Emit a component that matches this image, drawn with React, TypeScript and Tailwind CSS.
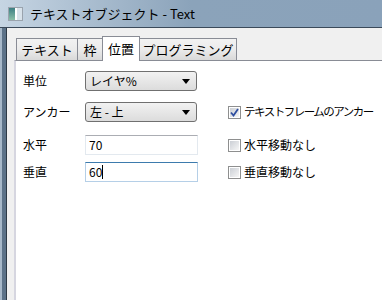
import React from 'react';

const font = { fontFamily: '"Noto Sans CJK JP", "Liberation Sans", sans-serif' };

function Tab({ label, active, w }: { label: string; active?: boolean; w: string }) {
  if (active) {
    return (
      <div className={`${w} h-[25px] -mb-[1px] -ml-[1px] relative z-10 shrink-0 flex items-center justify-center border border-b-0 border-[#898c95] bg-white text-[13px] text-black whitespace-nowrap`}>
        {label}
      </div>
    );
  }
  return (
    <div className={`${w} h-[22px] -ml-[1px] first:ml-0 shrink-0 flex items-center justify-center border border-b-0 border-[#898c95] bg-gradient-to-b from-[#f2f2f2] via-[#ebebeb] to-[#d9d9d9] text-[13px] text-black whitespace-nowrap`}>
      {label}
    </div>
  );
}

function Combo({ value }: { value: string }) {
  return (
    <div className="w-[112px] h-[20px] shrink-0 flex items-center justify-between pl-[4px] pr-[6px] rounded-[3px] border border-[#707070] bg-gradient-to-b from-[#f2f2f2] to-[#dcdcdc] text-[12px] whitespace-nowrap">
      <span>{value}</span>
      <svg width="8" height="5" viewBox="0 0 8 5">
        <path d="M0 0 H8 L4 5 Z" fill="#000" />
      </svg>
    </div>
  );
}

function Check({ checked, label, tight }: { checked?: boolean; label: string; tight?: boolean }) {
  return (
    <div className="flex items-center gap-[3px] text-[12px] whitespace-nowrap shrink-0">
      <div className="w-[13px] h-[13px] shrink-0 border border-[#8e8f8f] bg-white p-[1px]">
        <div className="w-full h-full bg-gradient-to-br from-[#cbcfd5] to-[#f6f6f6] flex items-center justify-center">
          {checked && (
            <svg width="9" height="9" viewBox="0 0 9 9">
              <path d="M1 4.5 L3.5 7.5 L8 1" stroke="#2f4fa0" strokeWidth="1.8" fill="none" />
            </svg>
          )}
        </div>
      </div>
      <span className={tight ? 'text-[11.5px] tracking-[-1.5px]' : ''}>{label}</span>
    </div>
  );
}

export default function App() {
  return (
    <div className="w-[382px] h-[300px] overflow-hidden flex flex-col bg-[#8ea5bc] text-black" style={font}>
      {/* title bar */}
      <div className="h-[28px] shrink-0 flex items-center bg-gradient-to-r from-[#c6d5e3] via-[#8ba3ba] to-[#8aa2ba] border-b border-[#3b4a5a]">
        <div className="ml-[8px] w-[15px] h-[14px] border border-[#9aa3ad] bg-white flex">
          <div className="w-[6px] h-full bg-gradient-to-b from-[#3c7f83] to-[#8ac0a8]" />
          <div className="w-[2px]" />
          <div className="w-[5px] h-full bg-[#d8e2ea]" />
        </div>
        <span className="ml-[7px] text-[13px] whitespace-nowrap">テキストオブジェクト - Text</span>
      </div>
      <div className="flex-1 flex min-h-0">
        {/* left frame */}
        <div className="w-[7px] flex shrink-0">
          <div className="w-[2px] bg-[#a7b8c9]" />
          <div className="w-[4px] bg-[#5c7288]" />
          <div className="w-[1px] bg-[#2d3945]" />
        </div>
        {/* client */}
        <div className="flex-1 min-w-0 bg-[#f0f0f0] pl-[7px] pt-[7px] flex flex-col">
          <div className="flex items-end pl-[2px] h-[25px]">
            <Tab label="テキスト" w="w-[62px]" />
            <Tab label="枠" w="w-[26px]" />
            <Tab label="位置" active w="w-[38px]" />
            <Tab label="プログラミング" w="w-[98px]" />
          </div>
          <div className="flex-1 border-t border-l-2 border-t-[#898c95] border-l-[#d6d6e0] bg-white pl-[7px] pt-[10px] text-[12px]">
            <div className="flex items-center h-[20px]">
              <span className="w-[62px] shrink-0 whitespace-nowrap">単位</span>
              <Combo value="レイヤ%" />
            </div>
            <div className="flex items-center h-[20px] mt-[11px]">
              <span className="w-[62px] shrink-0 whitespace-nowrap">アンカー</span>
              <Combo value="左 - 上" />
              <div className="ml-[31px] shrink-0">
                <Check checked tight label="テキストフレームのアンカー" />
              </div>
            </div>
            <div className="flex items-center h-[20px] mt-[13px]">
              <span className="w-[62px] shrink-0 whitespace-nowrap">水平</span>
              <div className="w-[113px] h-[20px] shrink-0 flex items-center pl-[3px] border border-[#e3e9ef] border-t-[#abadb3] bg-white">
                70
              </div>
              <div className="ml-[30px] shrink-0">
                <Check label="水平移動なし" />
              </div>
            </div>
            <div className="flex items-center h-[20px] mt-[7px]">
              <span className="w-[62px] shrink-0 whitespace-nowrap">垂直</span>
              <div className="w-[113px] h-[20px] shrink-0 flex items-center pl-[3px] border border-[#b5cfe7] border-t-[#3d7bad] bg-white">
                60<span className="w-[1px] h-[14px] bg-black" />
              </div>
              <div className="ml-[30px] shrink-0">
                <Check label="垂直移動なし" />
              </div>
            </div>
          </div>
        </div>
      </div>
    </div>
  );
}
